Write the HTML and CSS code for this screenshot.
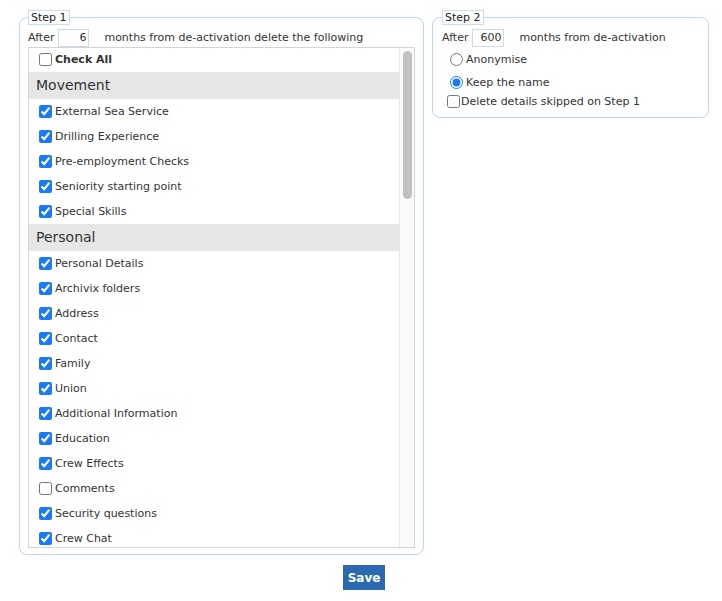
FILE: index.html
```html
<!DOCTYPE html>
<html lang="en">
<head>
    <meta charset="UTF-8">
    <title>De-activation clean-up</title>
    <link rel="stylesheet" href="styles.css">
</head>
<body>

<div class="page">
    <div class="steps">
        <fieldset class="step step-one">
            <legend>Step 1</legend>
            <div class="after-row">
                <span class="after-label">After</span>
                <input type="text" class="months" value="6">
                <span>months from de-activation delete the following</span>
            </div>

            <div class="list-box">
                <div class="list-items">
                    <label class="item check-all"><input type="checkbox"> Check All</label>

                    <div class="group-title">Movement</div>
                    <label class="item"><input type="checkbox" checked> External Sea Service</label>
                    <label class="item"><input type="checkbox" checked> Drilling Experience</label>
                    <label class="item"><input type="checkbox" checked> Pre-employment Checks</label>
                    <label class="item"><input type="checkbox" checked> Seniority starting point</label>
                    <label class="item"><input type="checkbox" checked> Special Skills</label>

                    <div class="group-title">Personal</div>
                    <label class="item"><input type="checkbox" checked> Personal Details</label>
                    <label class="item"><input type="checkbox" checked> Archivix folders</label>
                    <label class="item"><input type="checkbox" checked> Address</label>
                    <label class="item"><input type="checkbox" checked> Contact</label>
                    <label class="item"><input type="checkbox" checked> Family</label>
                    <label class="item"><input type="checkbox" checked> Union</label>
                    <label class="item"><input type="checkbox" checked> Additional Information</label>
                    <label class="item"><input type="checkbox" checked> Education</label>
                    <label class="item"><input type="checkbox" checked> Crew Effects</label>
                    <label class="item"><input type="checkbox"> Comments</label>
                    <label class="item"><input type="checkbox" checked> Security questions</label>
                    <label class="item"><input type="checkbox" checked> Crew Chat</label>
                </div>
                <!-- scroll position of the list -->
                <div class="scroll-track">
                    <div class="scroll-thumb"></div>
                </div>
            </div>
        </fieldset>

        <fieldset class="step step-two">
            <legend>Step 2</legend>
            <div class="after-row">
                <span class="after-label">After</span>
                <input type="text" class="months" value="600">
                <span>months from de-activation</span>
            </div>
            <label class="radio-row first"><input type="radio" name="mode"> Anonymise</label>
            <label class="radio-row"><input type="radio" name="mode" checked> Keep the name</label>
            <label class="skip-row"><input type="checkbox"> Delete details skipped on Step 1</label>
        </fieldset>
    </div>

    <div class="actions">
        <button class="save">Save</button>
    </div>
</div>

</body>
</html>
```

FILE: styles.css
```css
body {
    margin: 0;
    font-family: "DejaVu Sans", Verdana, sans-serif;
    font-size: 11px;
    color: #333;
    background-color: white;
}
.page {
    width: 690px;
    padding: 10px 0 0 19px;
}
.steps {
    display: flex;
    align-items: flex-start;
    gap: 8px;
}
.step {
    min-width: 0;
    margin: 0;
    padding: 3px 8px 6px 8px;
    border: 1px solid #bcd6f7;
    border-radius: 8px;
}
.step legend {
    padding: 0 2px;
    border: 1px solid #c9dcf2;
    line-height: 13px;
    color: #222;
}
.step-one {
    width: 387px;
}
.step-two {
    width: 258px;
    padding-left: 9px;
    padding-bottom: 9px;
}
.after-row {
    display: flex;
    align-items: center;
    height: 19px;
    white-space: nowrap;
}
.after-label {
    margin-right: 4px;
}
.months {
    box-sizing: border-box;
    width: 31px;
    height: 18px;
    margin: 0 15px 0 0;
    padding: 0 2px;
    border: 1px solid #cbdaed;
    font-family: inherit;
    font-size: 11px;
    color: #333;
    text-align: right;
}
.step-two .months {
    width: 32px;
}
.list-box {
    display: flex;
    height: 499px;
    border: 1px solid #d4d4d4;
}
.list-items {
    flex: 1;
    overflow: hidden;
}
.scroll-track {
    width: 14px;
    background-color: #fafafa;
    border-left: 1px solid #e8e8e8;
}
.scroll-thumb {
    width: 9px;
    height: 148px;
    margin: 3px 0 0 3px;
    background-color: #c1c1c1;
    border-radius: 5px;
}
.item {
    display: flex;
    align-items: center;
    box-sizing: border-box;
    height: 25px;
    padding-left: 10px;
}
.item input {
    width: 13px;
    height: 13px;
    margin: 0 3px 0 0;
    accent-color: #1a7af5;
}
.check-all {
    height: 24px;
    padding-bottom: 2px;
    font-weight: bold;
}
.group-title {
    height: 27px;
    line-height: 27px;
    padding-left: 7px;
    background-color: #e6e6e6;
    font-size: 14px;
    color: #333;
}
.radio-row {
    display: flex;
    align-items: center;
    height: 23px;
    padding-left: 8px;
}
.radio-row.first {
    margin-top: 1px;
}
.radio-row input {
    width: 13px;
    height: 13px;
    margin: 0 3px 0 0;
    accent-color: #1a7af5;
}
.skip-row {
    display: flex;
    align-items: center;
    height: 14px;
    padding-left: 5px;
}
.skip-row input {
    width: 13px;
    height: 13px;
    margin: 0 1px 0 0;
}
.actions {
    display: flex;
    justify-content: center;
    padding-top: 10px;
}
.save {
    height: 25px;
    padding: 0 5px;
    background-color: #2a69b0;
    color: white;
    border: none;
    font-family: "DejaVu Sans", Verdana, sans-serif;
    font-size: 12px;
    font-weight: bold;
    cursor: pointer;
}
.save:hover {
    background-color: #245c9b;
}
```
